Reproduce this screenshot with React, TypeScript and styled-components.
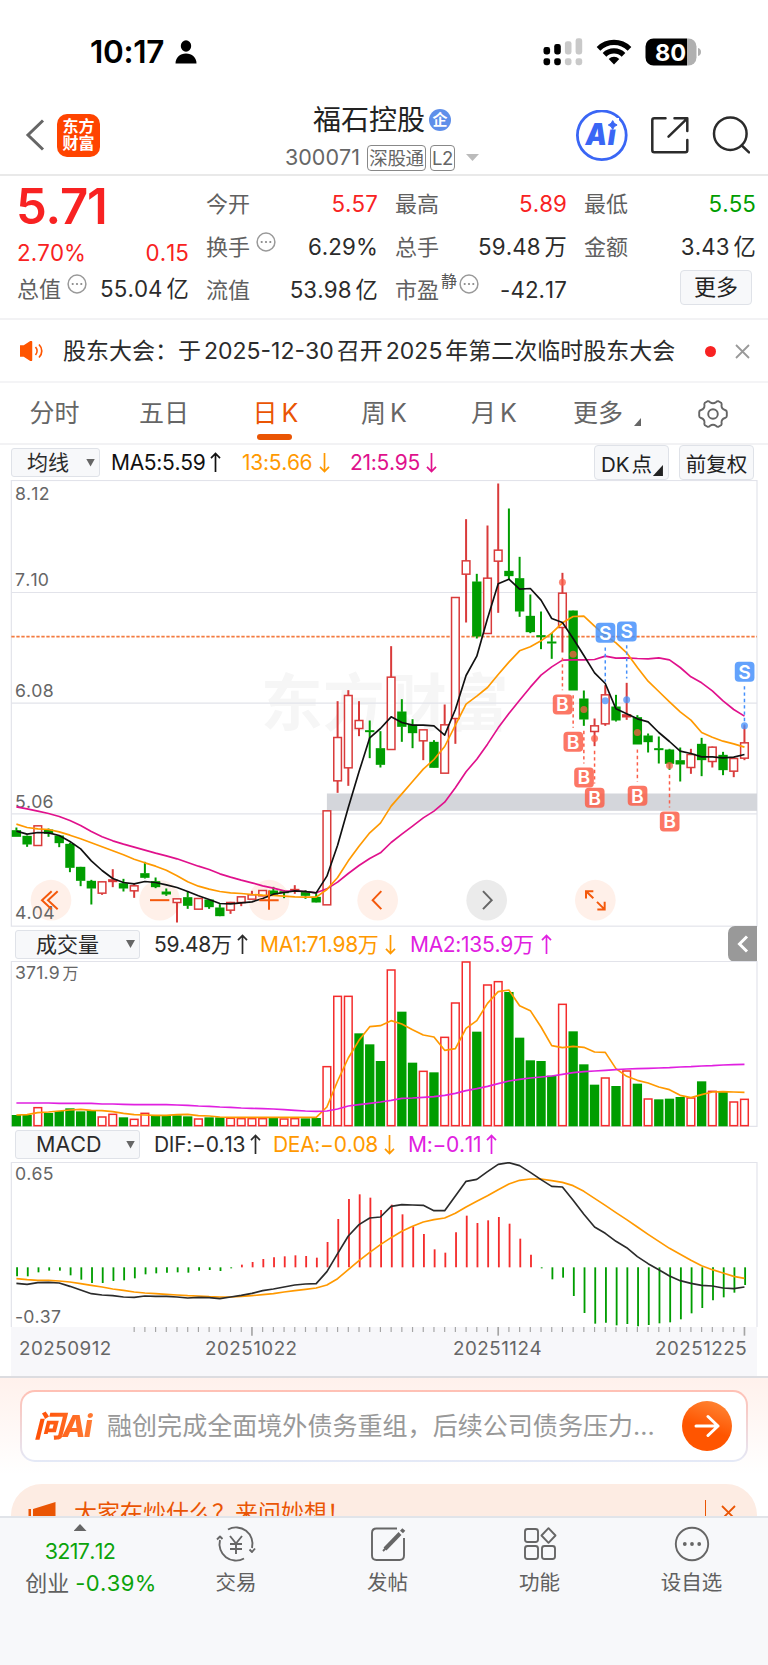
import React from "react";
import styled, { createGlobalStyle } from "styled-components";

const FONT = `Inter, "Noto Sans CJK SC", sans-serif`;
const UP = "#d93a3a";
const DOWN = "#009d00";
const ORANGE = "#ff9900";
const BRAND = "#ea5504";

const GlobalStyle = createGlobalStyle`
  * { box-sizing: border-box; }
  body { margin: 0; background: #fff; font-family: ${FONT}; font-kerning: none; color: #2b2b2b; }
  svg { display: block; flex: none; }
`;

/* ---------- market data, three units per pixel ---------- */

type Candle = [string, number, number, number, number];

const CANDLES: Candle[] = [
  ["g", 1072, 1081, 1099, 1099], ["g", 1096, 1098, 1122, 1130], ["r", 1066, 1067, 1126, 1126],
  ["g", 1075, 1079, 1090, 1100], ["g", 1095, 1097, 1118, 1131], ["g", 1118, 1122, 1192, 1206],
  ["g", 1190, 1191, 1231, 1248], ["g", 1229, 1233, 1254, 1303], ["r", 1234, 1235, 1269, 1274],
  ["r", 1197, 1228, 1235, 1251], ["g", 1226, 1240, 1254, 1264], ["r", 1239, 1247, 1262, 1283],
  ["g", 1175, 1210, 1222, 1225], ["g", 1222, 1234, 1250, 1254], ["g", 1255, 1265, 1272, 1277],
  ["r", 1285, 1286, 1297, 1357], ["g", 1265, 1282, 1306, 1316], ["r", 1284, 1285, 1317, 1318],
  ["g", 1288, 1289, 1310, 1316], ["g", 1302, 1313, 1337, 1338], ["r", 1295, 1297, 1320, 1331],
  ["r", 1280, 1280, 1297, 1308], ["r", 1262, 1274, 1287, 1287], ["r", 1260, 1261, 1277, 1278],
  ["g", 1250, 1262, 1272, 1273], ["g", 1260, 1264, 1268, 1284], ["r", 1245, 1257, 1261, 1271],
  ["g", 1260, 1264, 1276, 1286], ["g", 1268, 1281, 1296, 1297], ["r", 1021, 1022, 1304, 1304],
  ["r", 693, 802, 932, 968], ["r", 660, 676, 893, 947], ["r", 693, 751, 775, 798],
  ["g", 751, 781, 785, 864], ["g", 783, 835, 883, 892], ["r", 528, 621, 838, 838],
  ["g", 687, 725, 769, 815], ["g", 747, 765, 788, 834], ["r", 778, 779, 812, 870],
  ["g", 810, 816, 892, 893], ["r", 703, 764, 909, 909], ["r", 381, 382, 745, 821],
  ["r", 147, 272, 312, 457], ["g", 311, 335, 498, 505], ["r", 166, 324, 490, 490],
  ["r", 40, 240, 273, 428], ["g", 115, 303, 317, 327], ["g", 260, 325, 423, 440],
  ["g", 373, 438, 485, 489], ["g", 424, 496, 500, 537], ["g", 488, 515, 519, 566],
  ["r", 308, 369, 472, 547], ["g", 421, 422, 660, 660], ["g", 661, 686, 747, 767],
  ["r", 745, 767, 784, 828], ["r", 645, 674, 761, 767], ["g", 674, 710, 750, 754],
  ["r", 638, 733, 741, 749], ["g", 735, 742, 822, 822], ["g", 790, 797, 815, 847],
  ["g", 799, 835, 839, 880], ["g", 836, 839, 880, 899], ["g", 832, 871, 882, 934],
  ["r", 836, 853, 892, 911], ["g", 803, 822, 869, 918], ["r", 829, 831, 874, 892],
  ["g", 845, 855, 899, 915], ["r", 862, 865, 903, 921], ["r", 765, 818, 864, 870],
];

const MA5 = [1083, 1092, 1087, 1088, 1096, 1114, 1136, 1172, 1201, 1225, 1237, 1241, 1234, 1237, 1244, 1252, 1264, 1277, 1288, 1300, 1301, 1298, 1295, 1285, 1272, 1267, 1262, 1264, 1268, 1218, 1125, 1012, 905, 803, 775, 740, 757, 765, 765, 767, 795, 718, 616, 558, 445, 341, 327, 357, 355, 390, 445, 457, 505, 556, 608, 640, 716, 731, 746, 755, 787, 814, 843, 850, 860, 860, 863, 861, 853];
const MA13 = [1062, 1072, 1076, 1078, 1085, 1095, 1106, 1118, 1130, 1142, 1154, 1167, 1178, 1188, 1200, 1217, 1235, 1248, 1257, 1264, 1268, 1270, 1273, 1275, 1276, 1278, 1280, 1281, 1281, 1258, 1222, 1172, 1128, 1088, 1059, 1008, 971, 934, 897, 868, 829, 765, 702, 678, 652, 613, 576, 542, 530, 512, 489, 458, 439, 438, 468, 496, 518, 548, 592, 633, 664, 695, 725, 750, 787, 801, 813, 821, 831];
const MA21 = [1010, 1016, 1023, 1030, 1039, 1051, 1066, 1084, 1100, 1112, 1122, 1131, 1140, 1149, 1157, 1166, 1177, 1188, 1198, 1211, 1221, 1230, 1238, 1247, 1254, 1262, 1263, 1264, 1268, 1256, 1236, 1210, 1186, 1165, 1148, 1117, 1092, 1068, 1043, 1023, 996, 953, 905, 867, 822, 773, 730, 690, 651, 615, 590, 570, 569, 569, 568, 558, 564, 563, 565, 566, 563, 569, 592, 620, 638, 662, 692, 718, 738];

const VOLUME = "g587 g587 r563 g581 g575 g567 g576 g572 r591 r583 g594 r598 r580 g587 g589 g588 g591 r597 g594 g594 r595 r596 r596 r596 g596 r597 r596 g597 g596 r440 r229 r229 g342 g375 g425 r150 g277 g430 r454 g459 r352 r249 r126 g337 r195 r185 g218 g355 g423 g425 g469 r253 g336 g435 g496 r474 g500 r453 g493 r537 g540 g538 g533 r534 g486 r514 g517 r546 r538".split(" ");
const VMA1 = [586, 585, 579, 577, 574, 571, 569, 572, 573, 576, 581, 585, 586, 587, 587, 585, 584, 588, 589, 592, 593, 593, 593, 593, 593, 593, 593, 593, 593, 562, 484, 415, 362, 321, 318, 303, 313, 330, 346, 352, 392, 387, 326, 303, 251, 216, 211, 258, 273, 322, 378, 384, 380, 383, 397, 398, 447, 470, 482, 490, 502, 510, 527, 534, 525, 517, 516, 517, 518];
const VMA2 = [550, 550, 550, 550, 551, 551, 551, 551, 553, 553, 554, 555, 555, 555, 555, 556, 557, 559, 560, 562, 563, 565, 566, 567, 568, 570, 572, 574, 575, 574, 568, 559, 555, 551, 547, 542, 536, 535, 533, 531, 527, 521, 513, 507, 500, 492, 484, 479, 475, 472, 469, 464, 459, 456, 454, 452, 450, 448, 447, 446, 445, 444, 442, 441, 439, 438, 436, 435, 434];

const MACD = [378, 378, 366, 361, 361, 375, 388, 398, 398, 392, 390, 384, 372, 369, 367, 366, 367, 361, 359, 362, 354, 343, 335, 326, 321, 318, 315, 317, 322, 275, 206, 146, 132, 142, 179, 163, 192, 228, 251, 297, 307, 246, 196, 218, 210, 200, 220, 265, 313, 354, 387, 382, 437, 488, 520, 517, 525, 521, 528, 524, 519, 516, 507, 489, 473, 450, 441, 427, 404];
const DIF = [399, 402, 397, 396, 398, 408, 419, 430, 434, 436, 440, 441, 437, 438, 438, 440, 443, 441, 442, 445, 440, 435, 429, 421, 416, 410, 404, 401, 400, 364, 310, 257, 223, 203, 200, 168, 163, 164, 165, 181, 181, 137, 93, 87, 64, 42, 37, 46, 66, 88, 108, 110, 150, 192, 230, 249, 273, 292, 319, 340, 358, 377, 391, 399, 405, 407, 413, 415, 410];
const DEA = [385, 388, 390, 390, 392, 395, 400, 405, 410, 416, 420, 425, 428, 430, 432, 434, 436, 437, 439, 440, 440, 438, 436, 433, 430, 425, 421, 417, 413, 404, 385, 358, 331, 306, 283, 262, 243, 228, 215, 208, 203, 189, 170, 153, 136, 118, 101, 90, 86, 86, 91, 96, 106, 123, 144, 165, 187, 208, 230, 252, 273, 294, 312, 330, 346, 358, 368, 378, 384];

const LEFT = 34;
const RIGHT = 2271;
const cx = (i: number) => 49.2 + 32.12 * i;
const line = (v: number[]) => v.map((y, i) => `${cx(i).toFixed(1)},${y}`).join(" ");

/* ---------- shared pieces ---------- */

const Page = styled.div`
  width: 768px;
  height: 1665px;
  overflow: hidden;
  display: flex;
  flex-direction: column;
  background: #fff;
`;

const Text = styled.span<{ $size: number; $color?: string; $ls?: number; $weight?: number }>`
  font-size: ${(p) => p.$size}px;
  color: ${(p) => p.$color ?? "#2b2b2b"};
  letter-spacing: ${(p) => p.$ls ?? 0}px;
  font-weight: ${(p) => p.$weight ?? 400};
  line-height: 1;
  white-space: nowrap;
`;

const Caret = styled.i<{ $w: number; $h: number; $color: string; $up?: boolean }>`
  flex: none;
  width: ${(p) => p.$w}px;
  height: ${(p) => p.$h}px;
  background: ${(p) => p.$color};
  clip-path: ${(p) => (p.$up ? "polygon(50% 0, 100% 100%, 0 100%)" : "polygon(0 0, 100% 0, 50% 100%)")};
`;

const Corner = styled.i<{ $s: number; $color: string }>`
  width: ${(p) => p.$s}px;
  height: ${(p) => p.$s + 1}px;
  background: ${(p) => p.$color};
  clip-path: polygon(100% 0, 100% 100%, 0 100%);
`;

const Arrow = ({ down, color }: { down?: boolean; color: string }) => (
  <svg width="11" height="21" viewBox="0 0 11 21" fill="none" stroke={color} strokeWidth="1.7">
    <path d={down ? "M5.5 1V20M1 14.8L5.5 19.6L10 14.8" : "M5.5 20V1M1 6.2L5.5 1.4L10 6.2"} />
  </svg>
);

const MoreDots = () => (
  <svg width="20" height="20" viewBox="0 0 20 20" fill="none" stroke="#999" strokeWidth="1.5">
    <circle cx="10" cy="10" r="8.9" />
    <g fill="#888" stroke="none">
      <circle cx="5.7" cy="10" r="1.1" />
      <circle cx="10" cy="10" r="1.1" />
      <circle cx="14.3" cy="10" r="1.1" />
    </g>
  </svg>
);

/* ---------- status bar ---------- */

const StatusBar = styled.div`
  height: 96px;
  padding: 38px 66px 0 90px;
  display: flex;
  align-items: flex-start;
  justify-content: space-between;
`;
const StatusGroup = styled.div<{ $gap: number }>`
  height: 28px;
  display: flex;
  align-items: center;
  gap: ${(p) => p.$gap}px;
`;

const Status = () => (
  <StatusBar>
    <StatusGroup $gap={7}>
      <Text $size={31.5} $weight={600} $color="#000" $ls={-0.3} style={{ width: 78 }}>10:17</Text>
      <svg width="22" height="24" viewBox="0 0 22 24">
        <ellipse cx="11" cy="6" rx="5.2" ry="5.8" />
        <path d="M0.500 23.500c0-6 4.500-10 10.500-10s10.500 4 10.500 10z" />
      </svg>
    </StatusGroup>
    <StatusGroup $gap={13}>
      <svg width="40" height="28" viewBox="0 0 40 28">
        {[0, 1, 2, 3].map((i) => (
          <g key={i} fill={i < 2 ? "#000" : "#c9c9c9"}>
            <rect x={0.5 + i * 10.7} y={9 - i * 2.9} width="6.6" height={7.5 + i * 2.9} rx="2.4" />
            <rect x={0.5 + i * 10.7} y={20.2} width="6.6" height="7" rx="2.4" />
          </g>
        ))}
      </svg>
      <svg width="36" height="26" viewBox="0 0 36 26" fill="none" stroke="#000" strokeWidth="5.2">
        <path d="M2.5 9.8a22 22 0 0 1 31 0" />
        <path d="M8.500 15.800a13.500 13.500 0 0 1 19 0" />
        <path d="M18 25.500l-5.300-5.500a7.600 7.600 0 0 1 10.600 0z" fill="#000" stroke="none" />
      </svg>
      <svg width="57" height="28" viewBox="0 0 57 28">
        <path d="M42 0.500h1.500a8 8 0 0 1 8 8v11a8 8 0 0 1-8 8H42z" fill="#b0b0b0" />
        <path d="M8.500 0.500H42v27H8.500a8 8 0 0 1-8-8v-11a8 8 0 0 1 8-8z" fill="#000" />
        <path d="M53 10c2 .5 3 2 3 4s-1 3.500-3 4z" fill="#b0b0b0" />
        <text x="25.500" y="22.500" textAnchor="middle" fontSize="23.500" fontWeight="700" fill="#fff" fontFamily={FONT}>80</text>
      </svg>
    </StatusGroup>
  </StatusBar>
);

/* ---------- header ---------- */

const HeaderBar = styled.header`
  height: 80px;
  flex: none;
  border-bottom: 2px solid #e9e9e9;
  padding: 0 17px 0 25px;
  display: grid;
  grid-template-columns: 260px 1fr 177px;
`;
const HeaderLeft = styled.div`
  display: flex;
  align-items: center;
  gap: 12px;
`;
const Logo = styled.div`
  width: 43px;
  height: 43px;
  border-radius: 10px;
  background: #ff4400;
  color: #fff;
  font-size: 16px;
  font-weight: 700;
  line-height: 17px;
  text-align: center;
  padding-top: 4px;
`;
const TitleColumn = styled.div`
  display: flex;
  flex-direction: column;
`;
const TitleRow = styled.div`
  display: flex;
  align-items: center;
  height: 28px;
  margin: 10px 0 0 28px;
  gap: 4px;
`;
const Badge = styled.span`
  width: 22px;
  height: 22px;
  border-radius: 50%;
  background: #5f8fea;
  color: #fff;
  font-size: 15px;
  font-weight: 700;
  line-height: 21px;
  text-align: center;
`;
const CodeRow = styled.div`
  display: flex;
  align-items: center;
  height: 27px;
  margin-top: 10px;
`;
const Tag = styled.span<{ $w: number }>`
  width: ${(p) => p.$w}px;
  height: 26px;
  border: 1.5px solid #888;
  border-radius: 4px;
  color: #666;
  font-size: 18.5px;
  line-height: 24px;
  text-align: center;
  letter-spacing: -0.4px;
  margin-right: 4px;
`;
const HeaderRight = styled.div`
  display: flex;
  align-items: flex-start;
  padding: 14px 0 0 2px;
`;

const Header = () => (
  <HeaderBar>
    <HeaderLeft>
      <svg width="20" height="32" viewBox="0 0 20 32" fill="none" stroke="#666" strokeWidth="3">
        <path d="M18 1.500L3 16L18 30.500" />
      </svg>
      <Logo>东方<br />财富</Logo>
    </HeaderLeft>
    <TitleColumn>
      <TitleRow>
        <Text $size={28} $color="#222">福石控股</Text>
        <Badge>企</Badge>
      </TitleRow>
      <CodeRow>
        <Text $size={21.5} $color="#666" style={{ width: 82 }}>300071</Text>
        <Tag $w={59}>深股通</Tag>
        <Tag $w={25}>L2</Tag>
        <Caret $w={13} $h={7} $color="#bbb" style={{ marginLeft: 7 }} />
      </CodeRow>
    </TitleColumn>
    <HeaderRight>
      <svg width="174" height="52" viewBox="0 0 174 52" fill="none">
        <circle cx="25.800" cy="25.300" r="24.400" stroke="#3a66f5" strokeWidth="2.800" />
        <text x="9.500" y="35.300" fontSize="29.500" fontWeight="900" fontStyle="italic" letterSpacing="0.800" textLength="31" lengthAdjust="spacingAndGlyphs" fill="#3a66f5" fontFamily={FONT}>Ai</text>
        <rect x="31" y="8" width="12" height="11.500" fill="#fff" />
        <path d="M36.700 10.600q1 3.400 4.400 4.400q-3.400 1-4.400 4.400q-1-3.400-4.400-4.400q3.400-1 4.400-4.400z" fill="#3a66f5" stroke="#3a66f5" />
        <g stroke="#2b2b2b" strokeWidth="2.500" strokeLinecap="round" strokeLinejoin="round">
          <path d="M89.500 8.300H78.300Q76.300 8.300 76.300 10.300V40.300Q76.300 42.300 78.300 42.300H109.300Q111.300 42.300 111.300 40.300V30" />
          <path d="M98.500 8.300H111.300V21M110.800 8.800L92.500 26.700" />
          <circle cx="154.300" cy="23.700" r="16.300" />
          <path d="M165.800 35.500L173 42.300" />
        </g>
      </svg>
    </HeaderRight>
  </HeaderBar>
);

/* ---------- quote grid ---------- */

const QuoteArea = styled.section`
  height: 144px;
  flex: none;
  border-bottom: 2px solid #f2f2f4;
  padding: 7px 12px 0 17px;
  display: grid;
  grid-template-columns: repeat(4, 172px);
  column-gap: 17px;
`;
const QuoteColumn = styled.div`
  display: flex;
  flex-direction: column;
`;
const QuoteRow = styled.div<{ $h?: number }>`
  height: ${(p) => p.$h ?? 42.7}px;
  display: flex;
  align-items: center;
  justify-content: space-between;
`;
const LabelGroup = styled.span<{ $gap?: number }>`
  display: flex;
  align-items: center;
  gap: ${(p) => p.$gap ?? 6}px;
  svg { margin-top: -11px; }
`;
const Sup = styled.sup`
  font-size: 16px;
  line-height: 1;
  color: #555;
  margin: -17px -4px 0 -4px;
`;
const BigPrice = styled.div`
  height: 56px;
  margin-left: -1px;
  font-size: 49px;
  line-height: 48px;
  font-weight: 600;
  letter-spacing: -1.2px;
  color: #f82222;
`;
const MoreButton = styled.button`
  width: 72px;
  height: 35px;
  margin: 2px 4px 0 auto;
  border: 1.5px solid #dfe2e8;
  border-radius: 4px;
  background: #f7f8fa;
  color: #222;
  font: 22px/31px ${FONT};
  padding: 0;
`;

const Label = ({ children }: { children: React.ReactNode }) => <Text $size={22} $color="#606060">{children}</Text>;
const Value = ({ children, color, unit }: { children: React.ReactNode; color?: string; unit?: string }) => (
  <Text $size={22.3} $color={color} $ls={0.1}>
    {children}
    {unit && <Unit>{unit}</Unit>}
  </Text>
);
const Unit = styled.span`
  margin-left: 4px;
`;

const Quote = () => (
  <QuoteArea>
    <QuoteColumn>
      <BigPrice>5.71</BigPrice>
      <QuoteRow $h={29}>
        <Value color="#f82222">2.70%</Value>
        <Value color="#f82222">0.15</Value>
      </QuoteRow>
      <QuoteRow>
        <LabelGroup><Label>总值</Label><MoreDots /></LabelGroup>
        <Value unit="亿">55.04</Value>
      </QuoteRow>
    </QuoteColumn>
    <QuoteColumn>
      <QuoteRow><Label>今开</Label><Value color="#f82222">5.57</Value></QuoteRow>
      <QuoteRow><LabelGroup><Label>换手</Label><MoreDots /></LabelGroup><Value>6.29%</Value></QuoteRow>
      <QuoteRow><Label>流值</Label><Value unit="亿">53.98</Value></QuoteRow>
    </QuoteColumn>
    <QuoteColumn>
      <QuoteRow><Label>最高</Label><Value color="#f82222">5.89</Value></QuoteRow>
      <QuoteRow><Label>总手</Label><Value unit="万">59.48</Value></QuoteRow>
      <QuoteRow><LabelGroup><Label>市盈</Label><Sup>静</Sup><MoreDots /></LabelGroup><Value>-42.17</Value></QuoteRow>
    </QuoteColumn>
    <QuoteColumn>
      <QuoteRow><Label>最低</Label><Value color={DOWN}>5.55</Value></QuoteRow>
      <QuoteRow><Label>金额</Label><Value unit="亿">3.43</Value></QuoteRow>
      <MoreButton>更多</MoreButton>
    </QuoteColumn>
  </QuoteArea>
);

/* ---------- notice ---------- */

const NoticeBar = styled.section`
  height: 63px;
  flex: none;
  border-bottom: 2px solid #f4f4f6;
  padding: 1px 18px 0 20px;
  display: flex;
  align-items: center;
`;
const NoticeText = styled.div`
  flex: 1;
  margin-left: 19px;
  font-size: 23px;
  line-height: 1;
  white-space: nowrap;
  b { font-weight: 400; margin: 0 3px; }
`;
const RedDot = styled.i`
  width: 11px;
  height: 11px;
  border-radius: 50%;
  background: #f82222;
  margin-right: 19px;
`;

const Notice = () => (
  <NoticeBar>
    <svg width="24" height="20" viewBox="0 0 24 20" fill="none" stroke="#ff5500" strokeWidth="1.7">
      <path d="M0.500 5.500H4L11 1V19L4 14.500H0.500z" fill="#ff5500" strokeWidth="2.500" strokeLinejoin="round" />
      <path d="M15.500 6c2 2.300 2 5.700 0 8M19 3.500c3.700 3.700 3.700 9.300 0 13" />
    </svg>
    <NoticeText>股东大会：于<b>2025-12-30</b>召开<b>2025</b>年第二次临时股东大会</NoticeText>
    <RedDot />
    <svg width="15" height="15" viewBox="0 0 15 15" stroke="#999" strokeWidth="1.8">
      <path d="M1 1L14 14M14 1L1 14" />
    </svg>
  </NoticeBar>
);

/* ---------- period tabs ---------- */

const TabBar = styled.nav`
  height: 62px;
  flex: none;
  border-bottom: 2px solid #f2f2f4;
  display: grid;
  grid-template-columns: 109px 110px 113px 104px 116px 113px 95px;
`;
const Tab = styled.div<{ $active?: boolean }>`
  display: flex;
  justify-content: center;
  align-items: flex-start;
  padding-top: 17px;
  position: relative;
  font-size: 25px;
  line-height: 26px;
  word-spacing: -3px;
  color: ${(p) => (p.$active ? BRAND : "#666")};
  &::after {
    content: "";
    display: ${(p) => (p.$active ? "block" : "none")};
    position: absolute;
    bottom: 3.5px;
    left: 38px;
    width: 35px;
    height: 6px;
    border-radius: 3px;
    background: ${BRAND};
  }
  i { margin: 18px 3px 0 11px; }
`;

const Tabs = () => (
  <TabBar>
    <Tab>分时</Tab>
    <Tab>五日</Tab>
    <Tab $active>日 K</Tab>
    <Tab>周 K</Tab>
    <Tab>月 K</Tab>
    <Tab>更多<Corner $s={7} $color="#666" /></Tab>
    <Tab>
      <svg width="30" height="28" viewBox="0 0 30 28" fill="none" stroke="#666" strokeWidth="1.9" strokeLinejoin="round">
        <path d="M9.500 1.200Q11 1 12 2.200Q15 4.200 18 2.200Q19 1 20.500 1.200L23 2.700Q24 4 23.500 5.500Q23.500 9 27 10Q28.800 10.500 28.800 12V16Q28.800 17.500 27 18Q23.500 19 23.500 22.500Q24 24 23 25.300L20.500 26.800Q19 27 18 25.800Q15 23.800 12 25.800Q11 27 9.500 26.800L7 25.300Q6 24 6.500 22.500Q6.500 19 3 18Q1.200 17.500 1.200 16V12Q1.200 10.500 3 10Q6.500 9 6.500 5.500Q6 4 7 2.700z" />
        <circle cx="15" cy="14" r="4.800" />
      </svg>
    </Tab>
  </TabBar>
);

/* ---------- indicator rows ---------- */

const IndicatorRow = styled.div<{ $h: number; $left: number }>`
  height: ${(p) => p.$h}px;
  flex: none;
  padding: 0 11px 0 ${(p) => p.$left}px;
  display: flex;
  align-items: center;
`;
const Select = styled.div<{ $w: number; $pad: number }>`
  width: ${(p) => p.$w}px;
  height: 29px;
  border: 1.5px solid #dfe2e8;
  border-radius: 3px;
  background: #f7f8fa;
  padding: 0 4px 0 ${(p) => p.$pad}px;
  display: flex;
  align-items: center;
  justify-content: space-between;
`;
const Readings = styled.div<{ $left: number }>`
  flex: 1;
  display: flex;
  align-items: center;
  margin-left: ${(p) => p.$left}px;
`;
const Reading = styled.div<{ $w: number; $color: string; $ls?: number; $text: number }>`
  width: ${(p) => p.$w}px;
  display: flex;
  align-items: center;
  font-size: 21px;
  line-height: 1;
  letter-spacing: ${(p) => p.$ls ?? -0.3}px;
  color: ${(p) => p.$color};
  white-space: nowrap;
  span { width: ${(p) => p.$text}px; }
`;
const ToolButton = styled.div<{ $w: number }>`
  width: ${(p) => p.$w}px;
  height: 35px;
  border: 1.5px solid #dfe2e8;
  border-radius: 4px;
  background: #f7f8fa;
  display: flex;
  align-items: center;
  justify-content: center;
  color: #222;
  font-size: 20.5px;
  word-spacing: -4px;
  margin-right: 3px;
  margin-left: 7px;
  white-space: nowrap;
  i { align-self: flex-end; margin: 0 -1px 3px 1px; }
`;
const CollapseTab = styled.div`
  width: 29px;
  height: 36px;
  border-radius: 7px 0 0 7px;
  background: #999;
  display: flex;
  align-items: center;
  justify-content: center;
`;

/* ---------- charts ---------- */

const Curve = ({ data, color, w = 4.5 }: { data: number[]; color: string; w?: number }) => (
  <polyline points={line(data)} fill="none" stroke={color} strokeWidth={w} strokeLinejoin="round" />
);
const AxisText = ({ y, children }: { y: number; children: React.ReactNode }) => (
  <text x="45" y={y} fontSize="53" fill="#666" fontFamily={FONT} letterSpacing="0.5">{children}</text>
);

const SIGNALS: { i: number; kind: "B" | "S"; dot: number; from: number; to: number; box: number }[] = [
  { i: 51, kind: "B", dot: 336, from: 563, to: 660, box: 703 },
  { i: 52, kind: "B", dot: 552, from: 675, to: 773, box: 815 },
  { i: 53, kind: "B", dot: 718, from: 782, to: 880, box: 922 },
  { i: 54, kind: "B", dot: 805, from: 842, to: 940, box: 983 },
  { i: 58, kind: "B", dot: 787, from: 838, to: 935, box: 977 },
  { i: 61, kind: "B", dot: 886, from: 914, to: 1012, box: 1054 },
  { i: 55, kind: "S", dot: 692, from: 532, to: 635, box: 488 },
  { i: 57, kind: "S", dot: 689, from: 525, to: 625, box: 484 },
  { i: 68, kind: "S", dot: 767, from: 648, to: 765, box: 605 },
];

const CONTROLS: { x: number; gray?: boolean; d: string }[] = [
  { x: 153, d: "M2 -27L-27 0L2 27M20 -27L-9 0L20 27" },
  { x: 479, d: "M-29 0H29" },
  { x: 807, d: "M-29 0H29M0 -29V29" },
  { x: 1133, d: "M11 -27L-15 0L11 27" },
  { x: 1460, gray: true, d: "M-11 -27L15 0L-11 27" },
  { x: 1786, d: "M-28 -5V-27H-6M-27 -26L-6 -6M28 5V28H6M27 27L5 5" },
];

const PriceChart = () => (
  <svg width="768" height="447" viewBox="0 29.500 2304 1341">
    <text x="782" y="768" fontSize="186" fontWeight="700" fill="#f6f6f6" fontFamily={FONT}>东方财富</text>
    <g stroke="#e2e3ea" strokeWidth="3.500" fill="none">
      <rect x={LEFT} y="31" width={RIGHT - LEFT} height="1337" />
      <path d={`M${LEFT} 367H${RIGHT}M${LEFT} 699H${RIGHT}M${LEFT} 1031H${RIGHT}`} />
    </g>
    <rect x={cx(29)} y="970" width={RIGHT - cx(29)} height="52" fill="#d4d6db" />
    <path d={`M${LEFT} 499.500H${RIGHT}`} stroke="#f47b40" strokeWidth="5" strokeDasharray="10 5" />
    {CONTROLS.map((c) => (
      <circle key={c.x} cx={c.x} cy="1290" r="61" fill={c.gray ? "#ebebeb" : "#fff0e9"} />
    ))}
    <AxisText y={89}>8.12</AxisText>
    <AxisText y={347}>7.10</AxisText>
    <AxisText y={681}>6.08</AxisText>
    <AxisText y={1014}>5.06</AxisText>
    <AxisText y={1348}>4.04</AxisText>
    {CANDLES.map(([k, hi, top, bottom, lo], i) => {
      const x = cx(i);
      const c = k === "g" ? DOWN : UP;
      const solid = k === "g" || bottom - top < 9;
      return (
        <g key={i} stroke={c} strokeWidth="6">
          {top > hi && <path d={`M${x} ${hi}V${top}`} />}
          {lo > bottom && <path d={`M${x} ${bottom}V${lo}`} />}
          {solid ? (
            <rect x={x - 14} y={top - 1} width="28" height={bottom - top + 2} fill={c} stroke="none" />
          ) : (
            <rect x={x - 11.5} y={top} width="23" height={bottom - top} fill="#fff" strokeWidth="4.500" />
          )}
        </g>
      );
    })}
    <Curve data={MA21} color="#e0118c" w={5} />
    <Curve data={MA13} color={ORANGE} w={5} />
    <Curve data={MA5} color="#111" w={5} />
    {SIGNALS.map((s) => {
      const x = cx(s.i);
      const c = s.kind === "B" ? "#fb5d48" : "#4590fb";
      return (
        <g key={s.i}>
          <path d={`M${x} ${s.from}V${s.to}`} stroke={c} strokeWidth="4.500" strokeDasharray="10 9" />
          <circle cx={x} cy={s.dot} r="10.500" fill={c} opacity="0.75" />
          <rect x={x - 29} y={s.box - 30} width="59" height="60" rx="12" fill={c} opacity="0.84" />
          <text x={x} y={s.box + 21} textAnchor="middle" fontSize="58" fontWeight="600" fill="#fff" fontFamily={FONT}>{s.kind}</text>
        </g>
      );
    })}
    {CONTROLS.map((c) => (
      <path key={c.x} d={c.d} transform={`translate(${c.x} 1290)`} fill="none" stroke={c.gray ? "#666" : "#f4590c"} strokeWidth="6" />
    ))}
  </svg>
);

const VolumeChart = () => (
  <svg width="768" height="166" viewBox="0 124 2304 498">
    <path d={`M${LEFT} 125.500H${RIGHT}V620H${LEFT}z`} fill="none" stroke="#e2e3ea" strokeWidth="3.500" />
    <AxisText y={178}>371.9<tspan dx="8" fontSize="48">万</tspan></AxisText>
    {VOLUME.map((v, i) => {
      const y = Number(v.slice(1));
      return v[0] === "g" ? (
        <rect key={i} x={cx(i) - 14} y={y - 1} width="28" height={621 - y} fill={DOWN} />
      ) : (
        <rect key={i} x={cx(i) - 11.5} y={y + 1} width="23" height={617 - y} fill="#fff" stroke="#f42c2c" strokeWidth="4.500" />
      );
    })}
    <Curve data={VMA1} color={ORANGE} w={5} />
    <Curve data={VMA2} color="#e020e0" w={5} />
  </svg>
);

const MacdChart = () => (
  <svg width="768" height="165" viewBox="0 35 2304 495">
    <path d={`M${LEFT} 36.500H${RIGHT}V530M${LEFT} 36V530`} fill="none" stroke="#e2e3ea" strokeWidth="3.500" />
    <AxisText y={88}>0.65</AxisText>
    <AxisText y={518}>-0.37</AxisText>
    {MACD.map((v, i) => (
      <path key={i} d={`M${cx(i) + 2} 351V${v}`} stroke={v > 351 ? DOWN : "#f42c2c"} strokeWidth="5.500" />
    ))}
    <Curve data={DEA} color={ORANGE} w={5} />
    <Curve data={DIF} color="#2b2b2b" w={5} />
  </svg>
);

const Axis = styled.div`
  height: 49px;
  flex: none;
  margin: 0 11px;
  background: #f7f7fa;
`;
const AxisLabels = styled.div`
  padding: 1px 9px 0 8px;
  display: grid;
  grid-template-columns: 186px 248px 202px auto;
`;
const ticks = Array.from({ length: 58 }, (_, n) => n + 11);

const DateAxis = () => (
  <Axis>
    <svg width="746" height="12" viewBox="33 0 2238 36">
      {ticks.map((i) => (
        <path key={i} d={`M${cx(i)} 0V${(i - 22) % 23 === 0 ? 26 : 15}`} stroke="#a5a5a5" strokeWidth={(i - 22) % 23 === 0 ? 5 : 3.5} />
      ))}
    </svg>
    <AxisLabels>
      {["20250912", "20251022", "20251124", "20251225"].map((d) => (
        <Text key={d} $size={18.8} $color="#666" $ls={0.5}>{d}</Text>
      ))}
    </AxisLabels>
  </Axis>
);

/* ---------- AI question area ---------- */

const AskArea = styled.section`
  height: 140px;
  flex: none;
  border-top: 2px solid #dcdce0;
  padding: 12px 11px 0;
  background: linear-gradient(#fff1ec, #fff 96px);
  overflow: hidden;
`;
const AskBox = styled.div`
  height: 72px;
  margin: 0 9px;
  border: 2px solid transparent;
  border-radius: 15px;
  background: linear-gradient(#fff, #fff) padding-box, linear-gradient(#ffc0b4, #e4e9f7) border-box;
  padding: 0 14px 0 12px;
  display: flex;
  align-items: center;
`;
const AskLogo = styled.span`
  width: 73px;
  font-size: 30px;
  line-height: 36px;
  font-weight: 800;
  font-style: italic;
  letter-spacing: -1.5px;
  white-space: nowrap;
  color: transparent;
  background: linear-gradient(100deg, #ff4a00, #ff8a45);
  background-clip: text;
`;
const AskButton = styled.span`
  width: 50px;
  height: 50px;
  margin-left: auto;
  border-radius: 50%;
  background: linear-gradient(200deg, #ff8c3c, #ff5500 55%);
  display: flex;
  align-items: center;
  justify-content: center;
`;
const PromoCard = styled.div`
  height: 62px;
  margin-top: 22px;
  border-radius: 31px;
  background: #fdece3;
  padding: 16px 21px 0 17px;
  display: flex;
`;
const PromoClose = styled.div`
  margin-left: auto;
  border-left: 1.5px solid ${BRAND};
  height: 24px;
  padding: 5px 0 0 15px;
`;

const Ask = () => (
  <AskArea>
    <AskBox>
      <AskLogo>问Ai</AskLogo>
      <Text $size={25} $color="#999" $ls={0.05}>融创完成全面境外债务重组，后续公司债务压力...</Text>
      <AskButton>
        <svg width="26" height="24" viewBox="0 0 26 24" fill="none" stroke="#fff" strokeWidth="3" strokeLinecap="round" strokeLinejoin="round">
          <path d="M2 12H24M14 2.500L24 12L14 21.500" />
        </svg>
      </AskButton>
    </AskBox>
    <PromoCard>
      <svg width="28" height="26" viewBox="0 0 28 26" fill={BRAND}>
        <path d="M0.500 9H3V26H0.500zM5 9L27.500 2V26H5z" />
      </svg>
      <Text $size={23} $color={BRAND} style={{ margin: "2px 0 0 18px" }}>大家在炒什么？来问妙想！</Text>
      <PromoClose>
        <svg width="15" height="15" viewBox="0 0 15 15" stroke={BRAND} strokeWidth="1.8"><path d="M1 1L14 14M14 1L1 14" /></svg>
      </PromoClose>
    </PromoCard>
  </AskArea>
);

/* ---------- bottom bar ---------- */

const BottomBar = styled.footer`
  flex: 1;
  border-top: 2px solid #e1e4e9;
  background: #f7f8fa;
  display: grid;
  grid-template-columns: 160px 152px 151px 153px 151px;
  align-items: start;
`;
const IndexCell = styled.div`
  display: flex;
  flex-direction: column;
  align-items: center;
  padding-top: 6px;
`;
const IndexLine = styled.div`
  display: flex;
  gap: 6px;
  margin: 9px 0 0 22px;
`;
const NavItem = styled.div`
  display: flex;
  flex-direction: column;
  align-items: center;
  gap: 11px;
  padding-top: 8px;
`;

const NavIcon = ({ children }: { children: React.ReactNode }) => (
  <svg width="40" height="36" viewBox="0 0 40 36" fill="none" stroke="#666" strokeWidth="1.9" strokeLinejoin="round">{children}</svg>
);

const Bottom = () => (
  <BottomBar>
    <IndexCell>
      <Caret $w={13} $h={7} $color="#666" $up />
      <Text $size={21.5} $color="#0ba30b" $ls={-0.7} style={{ marginTop: 10 }}>3217.12</Text>
      <IndexLine>
        <Text $size={22} $color="#606060">创业</Text>
        <Text $size={22} $color="#0ba30b" $ls={0.4}>-0.39%</Text>
      </IndexLine>
    </IndexCell>
    <NavItem>
      <NavIcon>
        <path d="M12 3.500A16.500 16.500 0 0 1 36 22M33.500 23.500L36 26L39 22.500M28 32.500A16.500 16.500 0 0 1 4 14M1 13.500L4 10.500L6.500 13" />
        <path d="M14 10L20 17.500L26 10M20 17.500V28M14 18H26M14 23H26" />
      </NavIcon>
      <Text $size={20.5} $color="#606060">交易</Text>
    </NavItem>
    <NavItem>
      <NavIcon>
        <path d="M29 2.500H8.500Q4 2.500 4 7V29.500Q4 34 8.500 34H31.500Q36 34 36 29.500V12" />
        <path d="M35.800 3.500L33.500 6" strokeWidth="4" />
        <path d="M32 7.500L17 23" strokeWidth="4" />
        <path d="M18 22L15 25" />
      </NavIcon>
      <Text $size={20.5} $color="#606060">发帖</Text>
    </NavItem>
    <NavItem>
      <NavIcon>
        <rect x="5" y="3" width="13" height="13" rx="2.500" />
        <rect x="5" y="20" width="13" height="13" rx="2.500" />
        <rect x="22" y="20" width="13" height="13" rx="2.500" />
        <path d="M28.500 2.200L35.500 9.500L28.500 16.800L21.500 9.500z" />
      </NavIcon>
      <Text $size={20.5} $color="#606060">功能</Text>
    </NavItem>
    <NavItem>
      <NavIcon>
        <circle cx="20" cy="18" r="16.200" />
        <g fill="#666" stroke="none">
          <circle cx="12.800" cy="18" r="1.900" />
          <circle cx="20" cy="18" r="1.900" />
          <circle cx="27.200" cy="18" r="1.900" />
        </g>
      </NavIcon>
      <Text $size={20.5} $color="#606060">设自选</Text>
    </NavItem>
  </BottomBar>
);

export default function App() {
  return (
    <Page>
      <GlobalStyle />
      <Status />
      <Header />
      <Quote />
      <Notice />
      <Tabs />
      <IndicatorRow $h={35} $left={11}>
        <Select $w={89} $pad={15}>
          <Text $size={21}>均线</Text>
          <Caret $w={9} $h={8} $color="#666" />
        </Select>
        <Readings $left={11}>
          <Reading $w={131} $text={99} $color="#111"><span>MA5:5.59</span><Arrow color="#111" /></Reading>
          <Reading $w={108} $text={77} $color={ORANGE}><span>13:5.66</span><Arrow down color={ORANGE} /></Reading>
          <Reading $w={100} $text={76} $color="#e0118c"><span>21:5.95</span><Arrow down color="#e0118c" /></Reading>
        </Readings>
        <ToolButton $w={75}>DK 点<Corner $s={10} $color="#222" /></ToolButton>
        <ToolButton $w={75}>前复权</ToolButton>
      </IndicatorRow>
      <PriceChart />
      <IndicatorRow $h={34} $left={15}>
        <Select $w={125} $pad={20}>
          <Text $size={21}>成交量</Text>
          <Caret $w={9} $h={8} $color="#666" />
        </Select>
        <Readings $left={14}>
          <Reading $w={106} $text={83} $color="#2b2b2b"><span>59.48万</span><Arrow color="#2b2b2b" /></Reading>
          <Reading $w={150} $text={125} $color={ORANGE}><span>MA1:71.98万</span><Arrow down color={ORANGE} /></Reading>
          <Reading $w={150} $text={131} $color="#e020e0"><span>MA2:135.9万</span><Arrow color="#e020e0" /></Reading>
        </Readings>
        <CollapseTab>
          <svg width="12" height="18" viewBox="0 0 12 18" fill="none" stroke="#fff" strokeWidth="3"><path d="M10 1.500L2.500 9L10 16.500" /></svg>
        </CollapseTab>
      </IndicatorRow>
      <VolumeChart />
      <IndicatorRow $h={35} $left={15}>
        <Select $w={125} $pad={20}>
          <Text $size={21.5}>MACD</Text>
          <Caret $w={9} $h={8} $color="#666" />
        </Select>
        <Readings $left={14}>
          <Reading $w={119} $text={96} $color="#2b2b2b"><span>DIF:−0.13</span><Arrow color="#2b2b2b" /></Reading>
          <Reading $w={135} $text={111} $color={ORANGE}><span>DEA:−0.08</span><Arrow down color={ORANGE} /></Reading>
          <Reading $w={120} $text={78} $color="#e020e0"><span>M:−0.11</span><Arrow color="#e020e0" /></Reading>
        </Readings>
      </IndicatorRow>
      <MacdChart />
      <DateAxis />
      <Ask />
      <Bottom />
    </Page>
  );
}
